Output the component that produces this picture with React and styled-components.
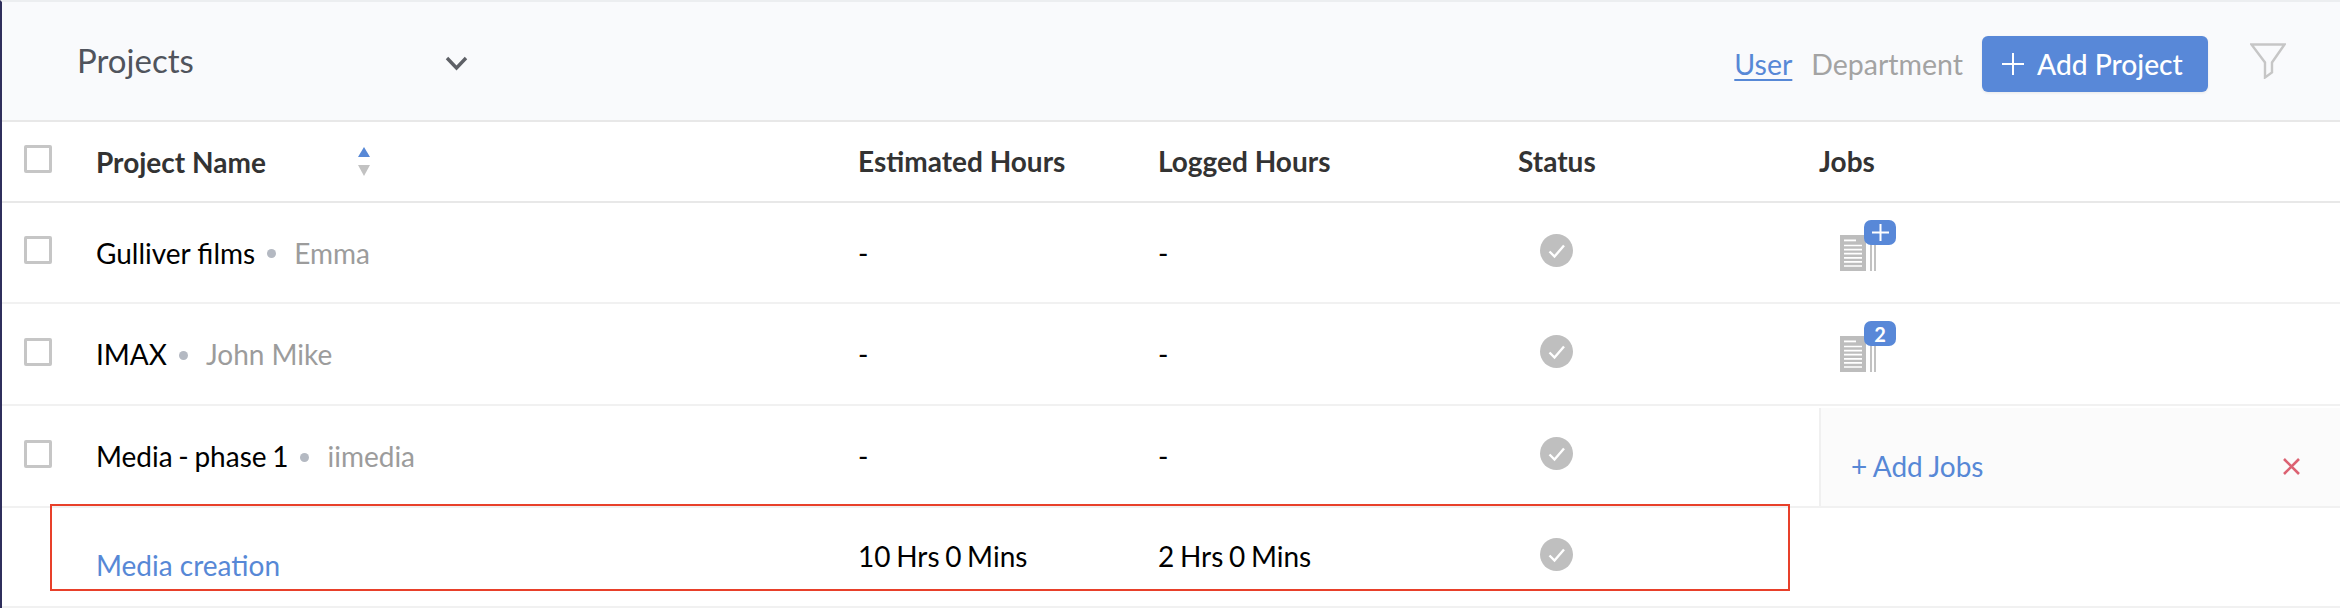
import React from "react";
import styled, { createGlobalStyle } from "styled-components";

const GlobalStyle = createGlobalStyle`
  html, body {
    margin: 0;
    padding: 0;
    background: #fff;
    font-family: "Lato", "Open Sans", sans-serif;
  }
`;

const Page = styled.div`
  width: 2340px;
  height: 608px;
  box-sizing: border-box;
  overflow: hidden;
  background: #fff;
  border-left: 2px solid #2f2f5c;
  border-top: 2px solid #eceef0;
`;

const TopBar = styled.header`
  display: flex;
  align-items: center;
  justify-content: space-between;
  height: 120px;
  box-sizing: border-box;
  padding: 0 54px 0 75px;
  background: #f9fafc;
  border-bottom: 2px solid #e8e8e8;
`;

const ModuleSelect = styled.div`
  display: flex;
  align-items: center;
  justify-content: space-between;
  width: 391px;
  font-size: 33px;
  color: #50545c;
  margin-top: -3px;
`;

const Chevron = styled.svg`
  width: 23px;
  height: 15px;
  margin-top: 7px;
`;

const Actions = styled.div`
  display: flex;
  align-items: center;
  margin-top: 6px;
`;

const ViewLink = styled.a`
  font-size: 28.5px;
  margin-right: 19px;
  color: ${(p) => (p.$active ? "#5788d6" : "#a3a3a3")};
  text-decoration: ${(p) => (p.$active ? "underline" : "none")};
  text-underline-offset: 4px;
`;

const AddButton = styled.button`
  display: flex;
  align-items: center;
  gap: 13px;
  width: 226px;
  height: 56px;
  box-sizing: border-box;
  padding: 0 0 0 20px;
  margin-right: 42px;
  border: none;
  border-radius: 6px;
  background: #5888d8;
  box-shadow: 0 1px 3px rgba(0, 0, 0, 0.08);
  color: #fff;
  font-family: inherit;
  font-size: 28.2px;
  font-weight: 500;
`;

const FilterIcon = styled.svg`
  width: 36px;
  height: 36px;
  margin-top: -6px;
`;

const Row = styled.div`
  position: relative;
  display: grid;
  grid-template-columns: 94px 762px 300px 360px 301px 1fr;
  align-items: center;
  height: ${(p) => p.$height}px;
  box-sizing: border-box;
  border-bottom: 2px solid ${(p) => (p.$head ? "#e8e8e8" : "#f1f1f1")};
  color: #000;
  font-size: 28px;
`;

const CheckCell = styled.div`
  display: flex;
  padding-left: 22px;
  margin-top: -5px;
`;

const Checkbox = styled.span`
  display: block;
  width: 28px;
  height: 28px;
  box-sizing: border-box;
  border: 3px solid #c6c6c6;
  border-radius: 2px;
`;

const HeadName = styled.div`
  display: flex;
  align-items: center;
  font-weight: 700;
  color: #333;
`;

const HeadCell = styled.div`
  font-weight: 700;
  color: #333;
  margin-top: -2px;
`;

const SortArrows = styled.svg`
  width: 14px;
  height: 30px;
  margin-left: 91px;
`;

const NameCell = styled.div`
  display: flex;
  align-items: center;
  word-spacing: ${(p) => (p.$tight ? -1.5 : 0)}px;
`;

const Dot = styled.span`
  width: 9px;
  height: 9px;
  margin: 2px 18px 0 12px;
  border-radius: 50%;
  background: #b4b9c2;
`;

const Owner = styled.span`
  color: #9c9c9c;
`;

const JobLink = styled.a`
  padding-top: 15px;
  color: #5788d6;
`;

const Logged = styled.div`
  margin-top: -3px;
  word-spacing: -1.5px;
`;

const StatusIcon = styled.svg`
  display: block;
  width: 33px;
  height: 33px;
  margin: -5px 0 0 22px;
`;

const JobsIcon = styled.div`
  position: relative;
  top: -7px;
  width: 78px;
  height: 52px;
  margin-left: 21px;
`;

const Badge = styled.span`
  position: absolute;
  top: 0;
  left: 24px;
  width: 32px;
  height: 25px;
  display: flex;
  align-items: center;
  justify-content: center;
  border-radius: 7px;
  background: #5888d8;
  color: #fff;
  font-size: 20px;
  font-weight: 700;
  line-height: 1;
`;

const JobsPanel = styled.div`
  display: flex;
  align-items: center;
  justify-content: space-between;
  align-self: stretch;
  margin-top: 2px;
  padding: 18px 40px 0 30px;
  background: #fbfbfb;
  border-left: 2px solid #f0f0f0;
  color: #5788d6;
  word-spacing: -0.7px;
`;

const Close = styled.svg`
  width: 17px;
  height: 17px;
`;

const Highlight = styled.div`
  position: absolute;
  left: 48px;
  top: -4px;
  width: 1740px;
  height: 87px;
  box-sizing: border-box;
  border: 2px solid #e8402a;
  pointer-events: none;
`;

const CheckCircle = () => (
  <StatusIcon viewBox="0 0 33 33">
    <circle cx="16.5" cy="16.5" r="16.5" fill="#bfbfbf" />
    <path d="M9.5 17.5l5 5 9.5-11" fill="none" stroke="#fff" strokeWidth="2.4" />
  </StatusIcon>
);

const DocIcon = ({ children }) => (
  <JobsIcon>
    <svg width="78" height="52" viewBox="0 0 78 52" style={{ display: "block" }}>
      <rect x="0" y="15" width="26" height="36" fill="#bdbdbd" />
      <rect x="4" y="19.5" width="12" height="1.8" fill="#fff" />
      <path
        d="M4 25.5h18M4 29.6h18M4 33.7h18M4 37.8h18M4 41.9h18M4 46h18"
        stroke="#fff"
        strokeWidth="1.7"
      />
      <rect x="30" y="20" width="2" height="31" fill="#c2c2c2" />
      <rect x="34" y="20" width="2" height="31" fill="#c2c2c2" />
    </svg>
    <Badge>{children}</Badge>
  </JobsIcon>
);

const PlusGlyph = ({ size, weight }) => (
  <svg width={size} height={size} viewBox="0 0 22 22" style={{ display: "block" }}>
    <path d="M11 0v22M0 11h22" stroke="#fff" strokeWidth={weight} />
  </svg>
);

const projects = [
  { name: "Gulliver films", owner: "Emma", height: 101, badge: <PlusGlyph size={17} weight={2.6} /> },
  { name: "IMAX", owner: "John Mike", height: 102, badge: "2" },
];

const App = () => (
  <Page>
    <GlobalStyle />
    <TopBar>
      <ModuleSelect>
        Projects
        <Chevron viewBox="0 0 23 15">
          <path d="M2 2l9.5 10L21 2" fill="none" stroke="#5e6066" strokeWidth="3.4" />
        </Chevron>
      </ModuleSelect>
      <Actions>
        <ViewLink $active>User</ViewLink>
        <ViewLink>Department</ViewLink>
        <AddButton>
          <PlusGlyph size={22} weight={2} />
          Add Project
        </AddButton>
        <FilterIcon viewBox="0 0 36 36">
          <path
            d="M1.5 1.5h33L22 19.5v10l-7 5v-15z"
            fill="none"
            stroke="#c6c6c6"
            strokeWidth="2.4"
          />
        </FilterIcon>
      </Actions>
    </TopBar>

    <Row $head $height={81}>
      <CheckCell>
        <Checkbox />
      </CheckCell>
      <HeadName>
        Project Name
        <SortArrows viewBox="0 0 14 30">
          <path d="M7 0l6 10H1z" fill="#5788d6" />
          <path d="M1 18h12l-6 11z" fill="#c2c2c2" />
        </SortArrows>
      </HeadName>
      <HeadCell>Estimated Hours</HeadCell>
      <HeadCell>Logged Hours</HeadCell>
      <HeadCell>Status</HeadCell>
      <HeadCell>Jobs</HeadCell>
    </Row>

    {projects.map((project) => (
      <Row key={project.name} $height={project.height}>
        <CheckCell>
          <Checkbox />
        </CheckCell>
        <NameCell>
          {project.name}
          <Dot />
          <Owner>{project.owner}</Owner>
        </NameCell>
        <div>-</div>
        <div>-</div>
        <CheckCircle />
        <DocIcon>{project.badge}</DocIcon>
      </Row>
    ))}

    <Row $height={102}>
      <CheckCell>
        <Checkbox />
      </CheckCell>
      <NameCell $tight>
        Media - phase 1
        <Dot />
        <Owner>iimedia</Owner>
      </NameCell>
      <div>-</div>
      <div>-</div>
      <CheckCircle />
      <JobsPanel>
        + Add Jobs
        <Close viewBox="0 0 17 17">
          <path d="M1 1l15 15M16 1L1 16" stroke="#dc6272" strokeWidth="2.6" />
        </Close>
      </JobsPanel>
    </Row>

    <Row $height={100}>
      <Highlight />
      <div />
      <JobLink>Media creation</JobLink>
      <Logged>10 Hrs 0 Mins</Logged>
      <Logged>2 Hrs 0 Mins</Logged>
      <CheckCircle />
      <div />
    </Row>
  </Page>
);

export default App;
